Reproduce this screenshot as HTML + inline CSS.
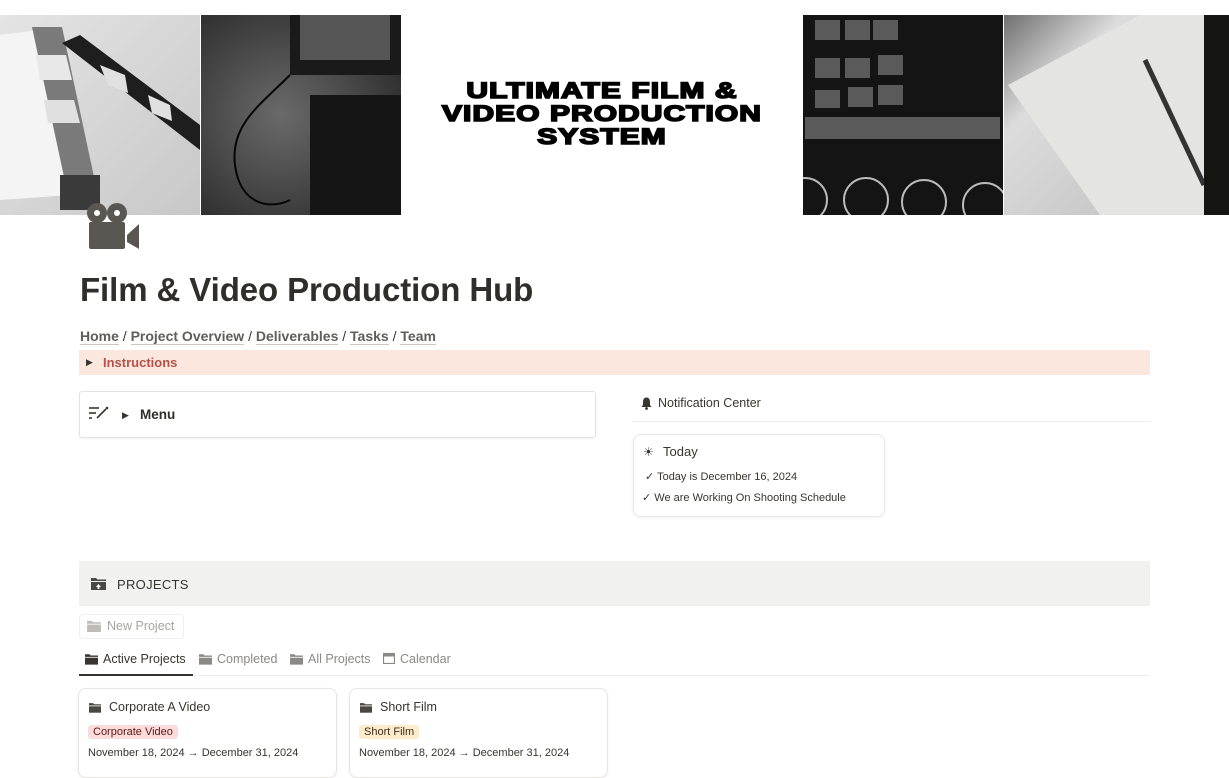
<!DOCTYPE html>
<html><head><meta charset="utf-8"><style>
*{margin:0;padding:0;box-sizing:border-box}
body{width:1229px;height:768px;overflow:hidden;background:#fff;font-family:"Liberation Sans",sans-serif;color:#37352f;position:relative}
.abs{position:absolute}
.banner{top:15px;left:0;width:1229px;height:200px}
.t{font-weight:900;font-size:22px;line-height:23px;color:#000;text-align:center;transform:scaleX(1.36);transform-origin:center;white-space:nowrap;letter-spacing:0.8px;-webkit-text-stroke:1.6px #000}
.nav a{color:#5f5e5a;text-decoration:none;border-bottom:1px solid #c9c8c4;font-weight:600}
.tab{position:absolute;top:652px;font-size:12.5px;color:#8a8985}
.card{position:absolute;top:688px;width:259px;height:90px;border:1px solid #e6e5e2;border-radius:8px;box-shadow:0 1px 3px rgba(0,0,0,.05)}
.card .h{position:absolute;left:10px;top:11px;font-size:12.5px;color:#37352f}
.card .tag{position:absolute;left:9px;top:36px;font-size:11px;padding:1px 5px;border-radius:3px}
.card .d{position:absolute;left:9px;top:58px;font-size:11px;color:#37352f}
</style></head><body>
<svg class="abs banner" width="1229" height="200" viewBox="0 0 1229 200">
<defs>
<linearGradient id="g1" x1="0" y1="0" x2="1" y2="1"><stop offset="0" stop-color="#e4e4e4"/><stop offset="1" stop-color="#c8c8c8"/></linearGradient>
<radialGradient id="g2" cx=".4" cy=".5" r=".7"><stop offset="0" stop-color="#6a6a6a"/><stop offset="1" stop-color="#2a2a2a"/></radialGradient>
<linearGradient id="g3" x1="0" y1="0" x2="1" y2="1"><stop offset="0" stop-color="#707070"/><stop offset=".3" stop-color="#dcdcdc"/><stop offset="1" stop-color="#bdbdbd"/></linearGradient>
<clipPath id="c4"><rect x="803" y="0" width="200" height="200"/></clipPath>
</defs>
<rect x="0" y="0" width="200" height="200" fill="url(#g1)"/>
<polygon points="0,20 40,15 70,180 0,185" fill="#f4f4f4"/>
<polygon points="32,12 62,12 100,190 70,190" fill="#7a7a7a"/>
<polygon points="36,40 66,40 72,65 40,65" fill="#e8e8e8"/>
<polygon points="44,85 74,85 80,108 48,108" fill="#e0e0e0"/>
<polygon points="62,28 80,20 200,110 200,135" fill="#1e1e1e"/>
<polygon points="100,50 125,60 128,78 108,70" fill="#e0e0e0"/>
<polygon points="148,80 170,90 172,106 152,98" fill="#e0e0e0"/>
<rect x="60" y="160" width="40" height="35" fill="#3a3a3a"/>
<rect x="201" y="0" width="200" height="200" fill="url(#g2)"/>
<rect x="290" y="0" width="111" height="60" fill="#1a1a1a"/>
<rect x="300" y="0" width="90" height="45" fill="#555"/>
<rect x="310" y="80" width="91" height="120" fill="#151515"/>
<path d="M290 60 C260 90 230 110 235 150 C240 190 270 195 290 185" stroke="#050505" stroke-width="2" fill="none"/>
<rect x="401" y="0" width="402" height="200" fill="#fff"/>
<rect x="803" y="0" width="200" height="200" fill="#141414"/>
<g fill="#5a5a5a"><rect x="815" y="5" width="25" height="20"/><rect x="845" y="5" width="25" height="20"/><rect x="873" y="5" width="25" height="20"/><rect x="815" y="43" width="25" height="20"/><rect x="845" y="43" width="25" height="20"/><rect x="878" y="40" width="25" height="20"/><rect x="815" y="75" width="25" height="18"/><rect x="848" y="72" width="25" height="20"/><rect x="878" y="70" width="25" height="20"/><rect x="805" y="102" width="195" height="22"/></g>
<g fill="none" stroke="#bbb" stroke-width="2" clip-path="url(#c4)"><circle cx="805" cy="185" r="22"/><circle cx="866" cy="185" r="22"/><circle cx="924" cy="187" r="22"/><circle cx="985" cy="190" r="22"/></g>
<rect x="1004" y="0" width="200" height="200" fill="url(#g3)"/>
<polygon points="1008,70 1140,0 1204,0 1204,200 1100,200" fill="#e4e4e2"/>
<line x1="1145" y1="45" x2="1204" y2="170" stroke="#333" stroke-width="5"/>
<rect x="1204" y="0" width="25" height="200" fill="#151512"/>
</svg>
<div class="abs t" style="left:401px;width:402px;top:79px">ULTIMATE FILM &amp;</div>
<div class="abs t" style="left:401px;width:402px;top:102px">VIDEO PRODUCTION</div>
<div class="abs t" style="left:401px;width:402px;top:125px">SYSTEM</div>

<svg class="abs" style="left:85px;top:202px" width="55" height="48" viewBox="0 0 55 48">
<g fill="#5a5752"><circle cx="12" cy="11" r="10"/><circle cx="32" cy="11" r="10"/><rect x="4" y="20" width="36" height="27" rx="2"/><polygon points="42,33 54,22 54,47 42,40"/></g>
<g fill="#fff"><circle cx="12" cy="11" r="3"/><circle cx="32" cy="11" r="3"/></g>
</svg>

<div class="abs" style="left:80px;top:271px;font-size:33px;font-weight:700;color:#2f2e2a;letter-spacing:-0.1px">Film &amp; Video Production Hub</div>
<div class="abs nav" style="left:80px;top:328px;font-size:14px;color:#37352f"><a>Home</a> / <a>Project Overview</a> / <a>Deliverables</a> / <a>Tasks</a> / <a>Team</a></div>
<div class="abs" style="left:79px;top:350px;width:1071px;height:25px;background:#fbe7dd"></div>
<div class="abs" style="left:86px;top:357px;font-size:9px;color:#37352f">▶</div>
<div class="abs" style="left:103px;top:355px;font-size:13px;font-weight:700;color:#b4524a">Instructions</div>

<div class="abs" style="left:79px;top:391px;width:517px;height:47px;border:1px solid #e4e3e0;border-radius:3px;box-shadow:0 1px 2px rgba(0,0,0,.06)"></div>
<svg class="abs" style="left:89px;top:406px" width="20" height="14" viewBox="0 0 20 14"><g stroke="#37352f" stroke-width="1.6" fill="none"><line x1="0" y1="2" x2="10" y2="2"/><line x1="0" y1="7" x2="7" y2="7"/><line x1="0" y1="12" x2="3" y2="12"/><line x1="8" y1="12" x2="17" y2="3"/></g><circle cx="18" cy="2" r="1.3" fill="#37352f"/></svg>
<div class="abs" style="left:122px;top:410px;font-size:9px">▶</div>
<div class="abs" style="left:140px;top:407px;font-size:13.5px;font-weight:600;color:#2f2e2a">Menu</div>

<svg class="abs" style="left:641px;top:397px" width="11" height="13" viewBox="0 0 11 13"><path d="M5.5 0.5C2.8 0.5 2 3 2 5v3L0.5 10h10L9 8V5C9 3 8.2 0.5 5.5 0.5Z" fill="#37352f"/><circle cx="5.5" cy="11.5" r="1.4" fill="#37352f"/></svg>
<div class="abs" style="left:658px;top:396px;font-size:12.5px;color:#37352f">Notification Center</div>
<div class="abs" style="left:632px;top:421px;width:518px;height:1px;background:#eeedeb"></div>
<div class="abs" style="left:633px;top:434px;width:252px;height:83px;border:1px solid #e8e7e4;border-radius:8px;box-shadow:0 1px 3px rgba(0,0,0,.06)"></div>
<div class="abs" style="left:643px;top:445px;font-size:12px;color:#37352f">☀</div>
<div class="abs" style="left:663px;top:444px;font-size:13px;color:#37352f">Today</div>
<div class="abs" style="left:645px;top:470px;font-size:11px;color:#37352f">✓ Today is December 16, 2024</div>
<div class="abs" style="left:642px;top:491px;font-size:11px;color:#37352f">✓ We are Working On Shooting Schedule</div>

<div class="abs" style="left:79px;top:561px;width:1071px;height:45px;background:#f1f1ef"></div>
<svg class="abs" style="left:91px;top:577px" width="15" height="13" viewBox="0 0 15 13"><path d="M0 1h5l1.5 1.5H15V4H0Z" fill="#4a4844"/><path d="M0 5h15v8H0Z" fill="#4a4844"/><path d="M7.5 7l-2.5 3h1.6v2h1.8v-2H10Z" fill="#fff"/></svg>
<div class="abs" style="left:117px;top:577px;font-size:13px;color:#37352f;letter-spacing:.3px">PROJECTS</div>

<div class="abs" style="left:79px;top:614px;width:105px;height:25px;border:1px solid #efefed;border-radius:4px"></div>
<svg class="abs" style="left:87px;top:620px" width="14" height="12" viewBox="0 0 15 13"><path d="M0 1h5l1.5 1.5H15V4H0Z" fill="#bdbcb8"/><path d="M0 5h15v8H0Z" fill="#bdbcb8"/></svg>
<div class="abs" style="left:107px;top:619px;font-size:12.5px;color:#a5a4a0">New Project</div>

<svg class="abs" style="left:85px;top:653px" width="13" height="12" viewBox="0 0 15 13"><path d="M0 1h5l1.5 1.5H15V4H0Z" fill="#37352f"/><path d="M0 5h15v8H0Z" fill="#37352f"/></svg>
<div class="tab" style="left:103px;color:#37352f">Active Projects</div>
<div class="abs" style="left:79px;top:674px;width:114px;height:2px;background:#37352f"></div>
<div class="abs" style="left:193px;top:675px;width:957px;height:1px;background:#eeedeb"></div>
<svg class="abs" style="left:199px;top:653px" width="13" height="12" viewBox="0 0 15 13"><path d="M0 1h5l1.5 1.5H15V4H0Z" fill="#8a8985"/><path d="M0 5h15v8H0Z" fill="#8a8985"/></svg>
<div class="tab" style="left:217px">Completed</div>
<svg class="abs" style="left:290px;top:653px" width="13" height="12" viewBox="0 0 15 13"><path d="M0 1h5l1.5 1.5H15V4H0Z" fill="#8a8985"/><path d="M0 5h15v8H0Z" fill="#8a8985"/></svg>
<div class="tab" style="left:308px">All Projects</div>
<svg class="abs" style="left:383px;top:652px" width="12" height="12" viewBox="0 0 12 12"><rect x="0.5" y="1.5" width="11" height="10" fill="none" stroke="#8a8985" stroke-width="1.2"/><rect x="0.5" y="1.5" width="11" height="3" fill="#8a8985"/></svg>
<div class="tab" style="left:400px">Calendar</div>

<div class="card" style="left:78px">
<svg style="position:absolute;left:10px;top:13px" width="12" height="11" viewBox="0 0 15 13"><path d="M0 1h5l1.5 1.5H15V4H0Z" fill="#4a4844"/><path d="M0 5h15v8H0Z" fill="#4a4844"/></svg>
<div class="h" style="left:30px">Corporate A Video</div>
<div class="tag" style="background:#fbdcda;color:#5d1715">Corporate Video</div>
<div class="d">November 18, 2024 → December 31, 2024</div>
</div>
<div class="card" style="left:349px">
<svg style="position:absolute;left:10px;top:13px" width="12" height="11" viewBox="0 0 15 13"><path d="M0 1h5l1.5 1.5H15V4H0Z" fill="#4a4844"/><path d="M0 5h15v8H0Z" fill="#4a4844"/></svg>
<div class="h" style="left:30px">Short Film</div>
<div class="tag" style="background:#fbeccb;color:#402c1b">Short Film</div>
<div class="d">November 18, 2024 → December 31, 2024</div>
</div>
</body></html>
